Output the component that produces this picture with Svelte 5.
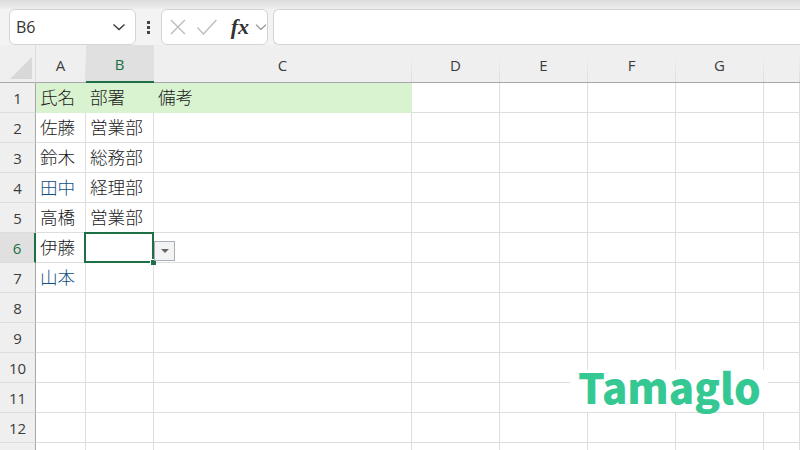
<script>
	const cols = ['A', 'B', 'C', 'D', 'E', 'F', 'G', ''];
	const rows = [
		['氏名', '部署', '備考'],
		['佐藤', '営業部'],
		['鈴木', '総務部'],
		['田中', '経理部'],
		['高橋', '営業部'],
		['伊藤', ''],
		['山本', ''],
		[], [], [], [], [], []
	];
</script>

<div class="app">
	<div class="ribbon-edge"></div>
	<div class="formula-bar">
		<div class="box name-box">
			<span>B6</span>
			<svg width="14" height="8" viewBox="0 0 14 8"><path d="M1.5 1.5 7 6.5l5.5-5" fill="none" stroke="#333" stroke-width="1.3" /></svg>
		</div>
		<div class="grip"><i></i><i></i><i></i></div>
		<div class="box actions">
			<svg width="18" height="18" viewBox="0 0 18 18"><path d="M2 2l14 14M16 2 2 16" fill="none" stroke="#bdbdbd" stroke-width="1.4" /></svg>
			<svg width="22" height="18" viewBox="0 0 22 18"><path d="M1.5 9.5 7.5 16 20.5 2" fill="none" stroke="#bdbdbd" stroke-width="1.4" /></svg>
			<span class="fx">fx</span>
			<svg class="fx-chevron" width="12" height="8" viewBox="0 0 12 8"><path d="M1 1.5 6 6.5l5-5" fill="none" stroke="#8a8a8a" stroke-width="1.1" /></svg>
		</div>
		<div class="box formula-input"></div>
	</div>

	<div class="sheet">
		<div class="corner"><div class="triangle"></div></div>
		{#each cols as col}
			<div class="col-head" class:active={col === 'B'}>{col}</div>
		{/each}

		{#each rows as row, r}
			<div class="row-head" class:active={r === 5}>{r < 12 ? r + 1 : ''}</div>
			{#each cols as col, c}
				<div class="cell" class:green={r === 0 && c < 3} class:blue={(r === 6 || r === 3) && c === 0}>
					<span>{row[c] ?? ''}</span>
					{#if r === 5 && c === 1}
						<div class="selection"><div class="handle"></div></div>
						<div class="drop"><div class="arrow"></div></div>
					{/if}
				</div>
			{/each}
		{/each}
	</div>

	<div class="logo">Tamaglo</div>
</div>

<style>
	:global(body) {
		margin: 0;
		overflow: hidden;
	}

	.app {
		position: relative;
		width: 800px;
		height: 450px;
		overflow: hidden;
		background: #f3f3f3;
		font-family: 'Noto Sans CJK JP', sans-serif;
	}

	.ribbon-edge {
		height: 9px;
		background: linear-gradient(#dcdcdc, #eeeeee);
	}

	.formula-bar {
		display: flex;
		align-items: center;
		height: 36px;
		padding-left: 9px;
	}

	.box {
		box-sizing: border-box;
		display: flex;
		align-items: center;
		height: 36px;
		background: #fff;
		border: 1px solid #d4d4d4;
		border-radius: 6px;
	}

	.name-box {
		justify-content: space-between;
		width: 127px;
		padding: 0 9px 0 6px;
		font: 16px 'Open Sans', sans-serif;
		color: #333;
	}

	.grip {
		display: flex;
		flex-direction: column;
		gap: 2px;
		width: 25px;
		align-items: center;
	}

	.grip i {
		width: 3px;
		height: 3px;
		background: #444;
	}

	.actions {
		width: 107px;
		padding-left: 7px;
		gap: 9px;
	}

	.fx {
		margin-left: 4px;
		font: italic bold 22px 'Liberation Serif', serif;
		color: #333;
	}

	.fx-chevron {
		margin-left: -3px;
	}

	.formula-input {
		flex: 1;
		margin-left: 5px;
		border-right: none;
		border-radius: 6px 0 0 6px;
	}

	.sheet {
		display: grid;
		grid-template-columns: 36px 50px 68px 258px repeat(4, 88px) 1fr;
		grid-template-rows: 38px repeat(13, 30px);
		background: #fff;
	}

	.corner {
		position: relative;
		box-sizing: border-box;
		background: #efefef;
		border-right: 1px solid #dcdcdc;
		border-bottom: 1px solid #a8a8a8;
	}

	.triangle {
		position: absolute;
		right: 3px;
		bottom: 3px;
		width: 0;
		height: 0;
		border-left: 22px solid transparent;
		border-bottom: 22px solid #d8d8d8;
	}

	.col-head {
		box-sizing: border-box;
		display: flex;
		align-items: center;
		justify-content: center;
		padding: 2px 1px 0 0;
		background: linear-gradient(to bottom, #efefef 25%, #dcdcdc) right / 1px 100% no-repeat, #efefef;
		border-bottom: 1px solid #a8a8a8;
		font: 15px 'Open Sans', sans-serif;
		color: #3c3c3c;
	}

	.col-head.active {
		background: #e0e0e0;
		border-bottom: 2px solid #1e6e46;
		color: #1e6e46;
	}

	.col-head:last-child {
		background: #efefef;
	}

	.row-head {
		box-sizing: border-box;
		display: flex;
		align-items: center;
		justify-content: center;
		background: #efefef;
		border-right: 1px solid #a8a8a8;
		border-bottom: 1px solid #dcdcdc;
		font: 15px 'Open Sans', sans-serif;
		color: #3c3c3c;
	}

	.row-head.active {
		background: #e0e0e0;
		border-right: 2px solid #1e6e46;
		color: #1e6e46;
	}

	.cell {
		position: relative;
		box-sizing: border-box;
		display: flex;
		align-items: center;
		padding-left: 4px;
		border-right: 1px solid #dedede;
		border-bottom: 1px solid #dedede;
		font-size: 17.6px;
		font-weight: 300;
		color: #1a1a1a;
	}

	.cell span {
		margin-top: -3px;
	}

	.cell.green {
		background: #d9f2d0;
		border-color: #d9f2d0;
	}

	.cell.blue {
		color: #124f86;
	}

	.selection {
		position: absolute;
		left: -2px;
		top: -1px;
		width: 70px;
		height: 31px;
		box-sizing: border-box;
		border: 2px solid #1e6e46;
		z-index: 2;
	}

	.handle {
		position: absolute;
		right: -4px;
		bottom: -4px;
		width: 5px;
		height: 5px;
		background: #1e6e46;
		border-top: 1px solid #fff;
		border-left: 1px solid #fff;
	}

	.drop {
		position: absolute;
		left: 68px;
		top: 8px;
		box-sizing: border-box;
		width: 21px;
		height: 20px;
		display: flex;
		align-items: center;
		justify-content: center;
		background: #f3f3f3;
		border: 1px solid #a9afb8;
		z-index: 3;
	}

	.arrow {
		width: 0;
		height: 0;
		border: 4px solid transparent;
		border-top: 4px solid #666;
		border-bottom: none;
	}

	.logo {
		position: absolute;
		left: 570px;
		top: 370px;
		box-sizing: border-box;
		width: 198px;
		height: 42px;
		padding-left: 8px;
		line-height: 32px;
		background: #fff;
		font-size: 42px;
		font-weight: 900;
		color: #35c892;
	}
</style>
